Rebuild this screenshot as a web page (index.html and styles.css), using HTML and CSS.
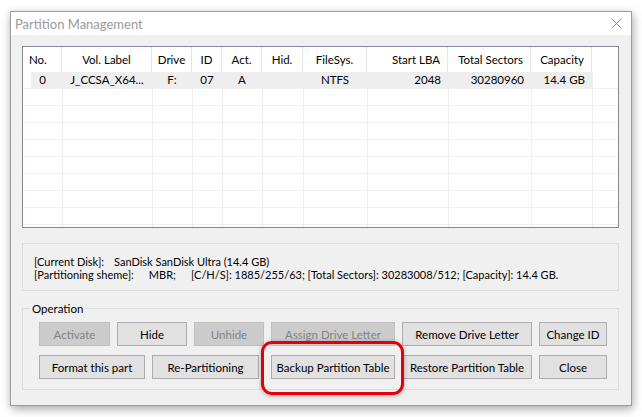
FILE: index.html
```html
<!DOCTYPE html>
<html lang="en">
<head>
    <meta charset="UTF-8">
    <title>Partition Management</title>
    <link rel="stylesheet" href="styles.css">
</head>
<body>
    <div class="window">
        <div class="titlebar">
            <span class="title">Partition Management</span>
            <svg class="close" viewBox="0 0 11 11">
                <path d="M0.5 0.5L10.5 10.5M10.5 0.5L0.5 10.5"></path>
            </svg>
        </div>

        <div class="content">
            <div class="list">
                <div class="row head">
                    <div class="cell left">No.</div>
                    <div class="cell">Vol. Label</div>
                    <div class="cell">Drive</div>
                    <div class="cell">ID</div>
                    <div class="cell">Act.</div>
                    <div class="cell">Hid.</div>
                    <div class="cell">FileSys.</div>
                    <div class="cell right">Start LBA</div>
                    <div class="cell right">Total Sectors</div>
                    <div class="cell right">Capacity</div>
                    <div class="cell fill"></div>
                </div>
                <div class="row selected">
                    <div class="cell">0</div>
                    <div class="cell">J_CCSA_X64...</div>
                    <div class="cell">F:</div>
                    <div class="cell">07</div>
                    <div class="cell">A</div>
                    <div class="cell"></div>
                    <div class="cell">NTFS</div>
                    <div class="cell right">2048</div>
                    <div class="cell right">30280960</div>
                    <div class="cell right">14.4 GB</div>
                    <div class="cell fill"></div>
                </div>
                <div class="row empty"><div class="cell"></div><div class="cell"></div><div class="cell"></div><div class="cell"></div><div class="cell"></div><div class="cell"></div><div class="cell"></div><div class="cell"></div><div class="cell"></div><div class="cell"></div><div class="cell"></div></div>
                <div class="row empty"><div class="cell"></div><div class="cell"></div><div class="cell"></div><div class="cell"></div><div class="cell"></div><div class="cell"></div><div class="cell"></div><div class="cell"></div><div class="cell"></div><div class="cell"></div><div class="cell"></div></div>
                <div class="row empty"><div class="cell"></div><div class="cell"></div><div class="cell"></div><div class="cell"></div><div class="cell"></div><div class="cell"></div><div class="cell"></div><div class="cell"></div><div class="cell"></div><div class="cell"></div><div class="cell"></div></div>
                <div class="row empty"><div class="cell"></div><div class="cell"></div><div class="cell"></div><div class="cell"></div><div class="cell"></div><div class="cell"></div><div class="cell"></div><div class="cell"></div><div class="cell"></div><div class="cell"></div><div class="cell"></div></div>
                <div class="row empty"><div class="cell"></div><div class="cell"></div><div class="cell"></div><div class="cell"></div><div class="cell"></div><div class="cell"></div><div class="cell"></div><div class="cell"></div><div class="cell"></div><div class="cell"></div><div class="cell"></div></div>
                <div class="row empty"><div class="cell"></div><div class="cell"></div><div class="cell"></div><div class="cell"></div><div class="cell"></div><div class="cell"></div><div class="cell"></div><div class="cell"></div><div class="cell"></div><div class="cell"></div><div class="cell"></div></div>
                <div class="row empty"><div class="cell"></div><div class="cell"></div><div class="cell"></div><div class="cell"></div><div class="cell"></div><div class="cell"></div><div class="cell"></div><div class="cell"></div><div class="cell"></div><div class="cell"></div><div class="cell"></div></div>
                <div class="row empty"><div class="cell"></div><div class="cell"></div><div class="cell"></div><div class="cell"></div><div class="cell"></div><div class="cell"></div><div class="cell"></div><div class="cell"></div><div class="cell"></div><div class="cell"></div><div class="cell"></div></div>
                <div class="row empty"><div class="cell"></div><div class="cell"></div><div class="cell"></div><div class="cell"></div><div class="cell"></div><div class="cell"></div><div class="cell"></div><div class="cell"></div><div class="cell"></div><div class="cell"></div><div class="cell"></div></div>
            </div>

            <div class="info">
                <div>[Current Disk]:<span class="gap-a">SanDisk SanDisk Ultra (14.4 GB)</span></div>
                <div>[Partitioning sheme]:<span class="gap-b">MBR;</span><span class="gap-c">[C/H/S]: 1885/255/63; [Total Sectors]: 30283008/512; [Capacity]: 14.4 GB.</span></div>
            </div>

            <fieldset class="operation">
                <legend>Operation</legend>
                <div class="btn-row">
                    <button class="btn w-activate" disabled>Activate</button>
                    <button class="btn w-hide">Hide</button>
                    <button class="btn w-hide" disabled>Unhide</button>
                    <button class="btn w-assign" disabled>Assign Drive Letter</button>
                    <button class="btn w-remove">Remove Drive Letter</button>
                    <button class="btn w-close">Change ID</button>
                </div>
                <div class="btn-row">
                    <button class="btn w-format">Format this part</button>
                    <button class="btn w-repart">Re-Partitioning</button>
                    <span class="highlight">
                        <button class="btn w-assign">Backup Partition Table</button>
                    </span>
                    <button class="btn w-restore">Restore Partition Table</button>
                    <button class="btn w-close">Close</button>
                </div>
            </fieldset>
        </div>
    </div>
</body>
</html>
```

FILE: styles.css
```css
* {
    margin: 0;
    padding: 0;
    box-sizing: border-box;
    font-family: Lato, "Liberation Sans", sans-serif;
}

body {
    width: 642px;
    height: 417px;
    background: #ffffff;
    padding: 11px 0 0 10px;
    overflow: hidden;
    font-size: 11.5px;
    color: #000;
}

.window {
    width: 622px;
    height: 395px;
    border: 1px solid #9c9c9c;
    background: #f0f0f0;
    box-shadow: 1px 3px 9px rgba(0, 0, 0, 0.35);
    display: flex;
    flex-direction: column;
}

.titlebar {
    height: 23px;
    background: #ffffff;
    display: flex;
    align-items: center;
    justify-content: space-between;
    padding: 0 9px 0 4px;
}

.title {
    font-size: 13px;
    color: #9a9a9a;
    padding-top: 1px;
}

.close {
    width: 11px;
    height: 11px;
    fill: none;
    stroke: #8c8c8c;
    stroke-width: 1;
}

.content {
    padding: 11px 11px 0 11px;
    display: flex;
    flex-direction: column;
}

/* partition list */
.list {
    height: 182px;
    width: 597px;
    border: 1px solid #828790;
    background: #ffffff;
    overflow: hidden;
}

.row {
    display: grid;
    grid-template-columns: 39px 90px 40px 30px 40px 41px 64px 81px 83px 61px 1fr;
}

.cell {
    text-align: center;
    white-space: nowrap;
    overflow: hidden;
}

.cell.left {
    text-align: left;
    padding-left: 6px;
}

.cell.right {
    text-align: right;
    padding-right: 7px;
}

.head {
    height: 25px;
    line-height: 25px;
}

.head .cell {
    border-right: 1px solid #e5e5e5;
}

.head .cell.fill {
    border-right: none;
}

.selected {
    height: 16px;
    line-height: 16px;
}

.selected .cell {
    background: #eeeeee;
}

.selected .cell:first-child {
    background: linear-gradient(to right, #ffffff 8px, #eeeeee 8px);
}

.selected .cell.fill {
    background: linear-gradient(to right, #eeeeee 1px, #ffffff 1px);
}

.empty {
    height: 17px;
    border-top: 1px solid #f0f0f0;
}

.empty .cell + .cell {
    border-left: 1px solid #f0f0f0;
}

/* disk info */
.info {
    margin-top: 15px;
    width: 597px;
    height: 48px;
    border: 1px solid #dcdcdc;
    padding: 11px 11px 0 11px;
    font-size: 11px;
    line-height: 13px;
}

.gap-a {
    margin-left: 10px;
}

.gap-b {
    margin-left: 15px;
}

.gap-c {
    margin-left: 15px;
}

/* operation group */
.operation {
    margin-top: 10px;
    width: 597px;
    border: 1px solid #dcdcdc;
    padding: 6px 0 10px 16px;
}

.operation legend {
    margin-left: -9px;
    padding: 0 2px;
    line-height: 15px;
}

.btn-row {
    display: flex;
    gap: 7px;
}

.btn-row + .btn-row {
    margin-top: 9px;
}

.btn {
    height: 24px;
    background: #e1e1e1;
    border: 1px solid #adadad;
    font-size: 11.5px;
    color: #000;
}

.btn:disabled {
    background: #cccccc;
    border-color: #bfbfbf;
    color: #838383;
}

.w-activate { width: 71px; }
.w-hide { width: 70px; }
.w-assign { width: 124px; }
.w-remove { width: 130px; }
.w-close { width: 68px; }
.w-format { width: 106px; }
.w-repart { width: 107px; }
.w-restore { width: 130px; }

.highlight {
    position: relative;
    margin-left: 5px;
    display: flex;
}

.highlight::after {
    content: "";
    position: absolute;
    left: -10px;
    right: -9px;
    top: -14px;
    bottom: -16px;
    border: 3px solid #e3000b;
    border-radius: 11px;
    box-shadow: 0 1px 4px rgba(0, 0, 0, 0.3);
}
```
